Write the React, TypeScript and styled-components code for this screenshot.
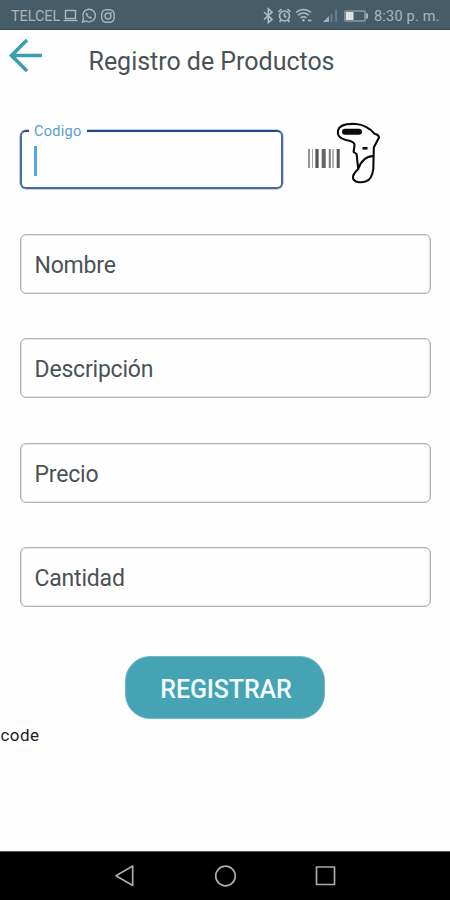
import React from 'react';
import styled, { createGlobalStyle } from 'styled-components';

const GlobalStyle = createGlobalStyle`
  * { box-sizing: border-box; }
  html, body { margin: 0; padding: 0; background: #fefefe; }
  body { font-family: Roboto, sans-serif; }
`;

const Screen = styled.div`
  width: 450px;
  height: 900px;
  display: flex;
  flex-direction: column;
  overflow: hidden;
  background: #fefefe;
`;

const StatusBar = styled.header`
  flex: none;
  height: 30px;
  display: flex;
  align-items: center;
  justify-content: space-between;
  padding: 3px 10px 0 11px;
  background: #465d69;
  border-bottom: 1px solid #344852;
  color: #a9b6bc;
`;

const StatusGroup = styled.div`
  display: flex;
  align-items: center;
  svg { display: block; }
`;

const Carrier = styled.span`
  width: 51px;
  font-size: 14.5px;
  letter-spacing: -0.1px;
  white-space: nowrap;
`;

const Clock = styled.span`
  width: 66px;
  margin-left: 4px;
  font-size: 14.5px;
  letter-spacing: 0.2px;
  white-space: nowrap;
`;

const TitleBar = styled.div`
  flex: none;
  height: 64px;
  display: flex;
  align-items: flex-start;
  padding: 8px 0 0 8px;
`;

const BackButton = styled.button`
  width: 36px;
  height: 36px;
  padding: 0;
  border: 0;
  background: none;
  svg { display: block; }
`;

const Title = styled.h1`
  margin: 9px 0 0 44.5px;
  font-size: 25px;
  line-height: 30px;
  font-weight: 400;
  letter-spacing: -0.02px;
  color: #4a5256;
  white-space: nowrap;
`;

const Form = styled.form`
  flex: 1;
  display: flex;
  flex-direction: column;
  padding: 35.5px 19px 0 20px;
`;

const CodeRow = styled.div`
  display: flex;
  height: 60px;
`;

const ActiveField = styled.div`
  position: relative;
  width: 263px;
  height: 59px;
  padding: 14px 0 0 12px;
  border: 2px solid #4a6c9d;
  border-top-color: #1f4c85;
  border-radius: 6px;
  box-shadow: 0 0 0 0.5px #8fa5c6;
`;

const FloatingLabel = styled.label`
  position: absolute;
  left: 7px;
  top: -9px;
  width: 58px;
  padding-left: 5px;
  background: #fefefe;
  color: #559fcb;
  font-size: 14.5px;
  line-height: 18px;
  letter-spacing: 0.3px;
`;

const Caret = styled.span`
  display: block;
  width: 3px;
  height: 30px;
  background: #5ba6db;
`;

const Scanner = styled.div`
  margin: -10px 0 0 22px;
  svg { display: block; }
`;

const Fields = styled.div`
  display: grid;
  gap: 44.5px;
  margin-top: 44px;
`;

const Field = styled.div`
  height: 60px;
  display: flex;
  align-items: center;
  padding: 3px 13.5px 0;
  border: 1px solid #b0b2b3;
  border-radius: 6px;
  box-shadow: inset 0 0 0 0.5px #c9cbcc;
  font-size: 23px;
  letter-spacing: -0.2px;
  color: #4a5256;
`;

const SubmitButton = styled.button`
  align-self: center;
  width: 200px;
  height: 63px;
  margin: 48.7px 0 0 -1px;
  padding: 4px 0 0 2px;
  border: 1px solid #70b9c5;
  border-radius: 25px;
  background: #45a3b4;
  color: #f1fbfc;
  font: 500 25px Roboto, sans-serif;
  letter-spacing: -0.1px;
`;

const Note = styled.div`
  margin: 6px 0 0 -19.5px;
  font-size: 17px;
  line-height: 20px;
  letter-spacing: 0.4px;
  color: #202020;
`;

const NavBar = styled.nav`
  flex: none;
  height: 49px;
  display: flex;
  justify-content: center;
  align-items: center;
  gap: 76px;
  background: #000;
  border-top: 1px solid #555;
  svg { display: block; }
`;

const CarrierIcons = () => (
  <svg width="54" height="16" viewBox="0 0 54 16" fill="none" stroke="#a9b6bc" strokeWidth="1.4">
    <rect x="3.5" y="2.5" width="10" height="8" />
    <path d="M1.5 12.5h14" />
    <path d="M20.5 14l1-3.6A6.3 6.3 0 1 1 24 13z" />
    <path d="M24.3 4.8c-1 1.5.4 3.4 1.4 4.3 1.4 1.3 3 1.9 4.1.8l-1.7-1.5-1.1.7-1.6-1.7.7-1.1z" fill="#a9b6bc" strokeWidth=".5" />
    <rect x="39.7" y="1.8" width="12.5" height="12.5" rx="4.5" />
    <circle cx="46" cy="8" r="3" />
    <circle cx="49.5" cy="4.6" r=".8" fill="#a9b6bc" stroke="none" />
  </svg>
);

const SystemIcons = () => (
  <svg width="108" height="18" viewBox="0 0 108 18" fill="none" stroke="#b0bcc1" strokeWidth="1.6">
    <path d="M2 5l8 7.3L6.3 15.5V1.8L10 5.2 2 12.5" />
    <circle cx="22.5" cy="9" r="5" />
    <path d="M16.5 5l3-3M28.5 5l-3-3M22.5 6v3.4l2 1M19 13l-1.5 2M26 13l1.5 2" />
    <path d="M34 5.5c4.5-4 10.5-4 15 0M36.2 8.2c3.3-2.7 7.3-2.7 10.6 0M38.5 11c2-1.6 4-1.6 6 0" />
    <circle cx="41.5" cy="13.3" r="1.2" fill="#b0bcc1" stroke="none" />
    <path d="M46 13.5h3.5" />
    <path d="M61 15l6-6v6z" fill="#a1afb5" stroke="none" />
    <path d="M69.5 7v8M74 2.5V15" stroke="#72848d" />
    <rect x="83" y="4" width="20" height="10" rx="1" stroke="#8c9ba2" />
    <path d="M84 5h7.5v8H84z" fill="#dce2e4" stroke="none" />
    <path d="M105 6.5v5" stroke="#a9b6bc" strokeWidth="2" />
  </svg>
);

const ArrowIcon = () => (
  <svg width="36" height="36" viewBox="0 0 36 36" fill="none" stroke="#3a9faf" strokeWidth="3.6">
    <path d="M34 17.5H3.5M19 2L3.5 17.5 19 33" />
  </svg>
);

const ScannerIcon = () => (
  <svg width="76" height="64" viewBox="0 0 76 64" fill="none" stroke="#0b0b0b" strokeLinejoin="round" strokeLinecap="round">
    <g stroke="#555" strokeLinecap="butt">
      <path d="M4 29v19" strokeWidth="1.8" stroke="#888" />
      <path d="M7.5 29v19" strokeWidth="1" stroke="#aaa" />
      <path d="M12 29v19" strokeWidth="3.2" />
      <path d="M18.7 29v19" strokeWidth="4" stroke="#656565" />
      <path d="M24.8 29v19" strokeWidth="2" stroke="#777" />
      <path d="M28 29v19" strokeWidth="1.3" stroke="#888" />
      <path d="M33.2 29v19" strokeWidth="3" />
    </g>
    <path d="M51 4C43 3.5 34.5 4.5 33 10.5c-1 5 2.5 8.2 8 9.5 6 1 9 2.2 8.5 5.4L48.6 32l3 2 1.6 15C50 52 47.5 54.5 48 58c.8 4.5 8 5 12.5 3.6C66 60 67.6 55 68.3 49l.5-21.5L74 17.5c0-2-2-3.2-4.5-3.8C64.5 8 58.5 4.5 51 4z" strokeWidth="2.1" />
    <path d="M53.2 49C55.5 42 60 36.5 68.3 36" strokeWidth="2" />
    <path d="M40 11.7h14" strokeWidth="6" />
    <path d="M57.5 28.3h5" strokeWidth="2.6" strokeLinecap="butt" />
  </svg>
);

const NavIcon = ({ children }: { children: React.ReactNode }) => (
  <svg width="24" height="24" viewBox="0 0 24 24" fill="none" stroke="#aaa" strokeWidth="1.7" strokeLinejoin="round">
    {children}
  </svg>
);

const fields = ['Nombre', 'Descripción', 'Precio', 'Cantidad'];

export default function App() {
  return (
    <>
      <GlobalStyle />
      <Screen>
        <StatusBar>
          <StatusGroup>
            <Carrier>TELCEL</Carrier>
            <CarrierIcons />
          </StatusGroup>
          <StatusGroup>
            <SystemIcons />
            <Clock>8:30 p. m.</Clock>
          </StatusGroup>
        </StatusBar>
        <TitleBar>
          <BackButton type="button"><ArrowIcon /></BackButton>
          <Title>Registro de Productos</Title>
        </TitleBar>
        <Form>
          <CodeRow>
            <ActiveField>
              <FloatingLabel>Codigo</FloatingLabel>
              <Caret />
            </ActiveField>
            <Scanner><ScannerIcon /></Scanner>
          </CodeRow>
          <Fields>
            {fields.map((name) => <Field key={name}>{name}</Field>)}
          </Fields>
          <SubmitButton type="button">REGISTRAR</SubmitButton>
          <Note>code</Note>
        </Form>
        <NavBar>
          <NavIcon><path d="M19.7 2v19.5L3 11.8z" /></NavIcon>
          <NavIcon><circle cx="12.5" cy="12" r="9.8" /></NavIcon>
          <NavIcon><rect x="3.5" y="3" width="18" height="17.5" /></NavIcon>
        </NavBar>
      </Screen>
    </>
  );
}
